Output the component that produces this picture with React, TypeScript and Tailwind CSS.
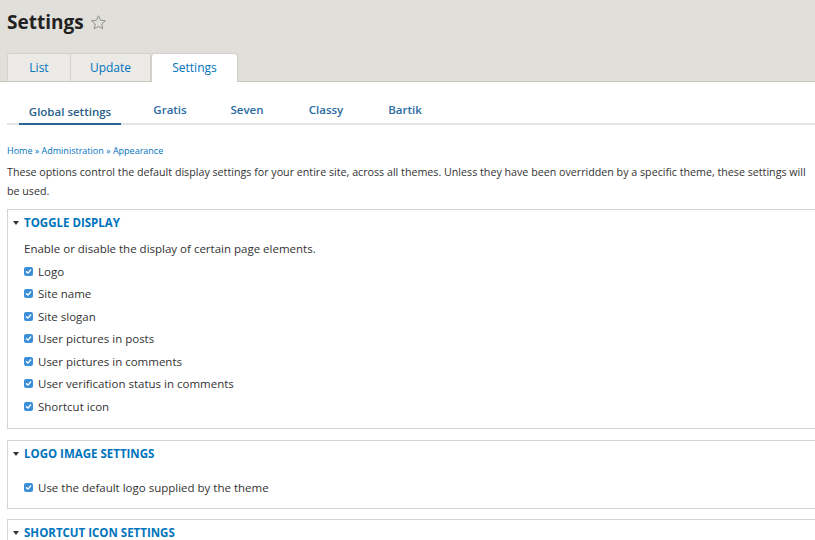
import React from 'react'

const ITEMS = [
  'Logo',
  'Site name',
  'Site slogan',
  'User pictures in posts',
  'User pictures in comments',
  'User verification status in comments',
  'Shortcut icon',
]

function Check() {
  return (
    <span className="w-[9px] h-[9px] rounded-[2px] bg-[#3b8fd9] flex items-center justify-center shrink-0">
      <svg width="7" height="7" viewBox="0 0 10 10" fill="none" stroke="white" strokeWidth="2" strokeLinecap="round" strokeLinejoin="round">
        <polyline points="2 5.2 4.2 7.3 8 2.8" />
      </svg>
    </span>
  )
}

function Legend({ title }: { title: string }) {
  return (
    <div className="flex items-center gap-[5px] h-[26px] pl-[5px] text-[11.5px] font-bold text-[#0074bd] uppercase">
      <svg width="6" height="4" viewBox="0 0 6 4"><polygon points="0,0 6,0 3,4" fill="#333" /></svg>
      {title}
    </div>
  )
}

function Option({ label }: { label: string }) {
  return (
    <div className="flex items-center gap-[5px] h-[22.5px] text-[11.5px] text-[#333]">
      <Check />
      {label}
    </div>
  )
}

export default function App() {
  return (
    <div className="w-[815px] h-[540px] overflow-hidden bg-white text-[#333]" style={{ fontFamily: '"Open Sans", "DejaVu Sans", sans-serif' }}>
      {/* Page header */}
      <div className="bg-[#e0dfda] border-b border-[#c9c7c0] pt-[8px]">
        <div className="flex items-center gap-[6px] pl-[7px] h-[28px]">
          <h1 className="text-[19px] font-bold text-[#222]">Settings</h1>
          <svg width="17" height="17" viewBox="0 0 24 24" fill="none" stroke="#8a8a85" strokeWidth="1.3" strokeLinejoin="round">
            <polygon points="12 2.5 14.9 8.8 21.7 9.5 16.6 14.1 18 20.8 12 17.4 6 20.8 7.4 14.1 2.3 9.5 9.1 8.8" />
          </svg>
        </div>
        <div className="flex items-end pl-[7px] mt-[16px] h-[29px]">
          <div className="w-[64px] h-[28px] flex items-center justify-center bg-[#ebeae6] border border-b-0 border-[#d3d1ca] rounded-tl-[3px] text-[12px] text-[#0074bd]">List</div>
          <div className="w-[80px] h-[28px] flex items-center justify-center bg-[#ebeae6] border border-l-0 border-b-0 border-[#d3d1ca] text-[12px] text-[#0074bd]">Update</div>
          <div className="w-[87px] h-[29px] -mb-px flex items-center justify-center bg-white border border-b-0 border-[#d3d1ca] rounded-t-[4px] text-[12px] text-[#0074bd]">Settings</div>
        </div>
      </div>

      {/* Secondary tabs */}
      <div className="flex items-end h-[43px] border-b-2 border-[#e4e4e2] ml-[7px]">
        <div className="w-[102px] ml-[12px] h-[22px] -mb-[2px] flex items-start justify-center border-b-2 border-[#2a6496] text-[11.5px] font-semibold text-[#2a5f8a]">Global settings</div>
        <div className="w-[98px] h-[22px] flex items-start justify-center text-[11.5px] font-semibold text-[#2a6ba3]">Gratis</div>
        <div className="w-[56px] h-[22px] flex items-start justify-center text-[11.5px] font-semibold text-[#2a6ba3]">Seven</div>
        <div className="w-[102px] h-[22px] flex items-start justify-center text-[11.5px] font-semibold text-[#2a6ba3]">Classy</div>
        <div className="w-[56px] h-[22px] flex items-start justify-center text-[11.5px] font-semibold text-[#2a6ba3]">Bartik</div>
      </div>

      <div className="pl-[7px] pt-[19px]">
        <div className="text-[9px] text-[#0074bd] leading-[14px]">Home » Administration » Appearance</div>
        <p className="mt-[5px] pr-[4px] text-[10.7px] leading-[19px] text-[#333]">
          These options control the default display settings for your entire site, across all themes. Unless they have been overridden by a specific theme, these settings will be used.
        </p>

        <div className="mt-[8px] -mr-[10px] border border-[#d4d4d4] bg-white">
          <Legend title="Toggle display" />
          <div className="pl-[16px] pt-[2px] pb-[10px]">
            <div className="h-[22px] flex items-center text-[11.5px] text-[#333]">Enable or disable the display of certain page elements.</div>
            {ITEMS.map((label) => (
              <Option key={label} label={label} />
            ))}
          </div>
        </div>

        <div className="mt-[11px] -mr-[10px] border border-[#d4d4d4] bg-white">
          <Legend title="Logo image settings" />
          <div className="pl-[16px] pt-[10px] pb-[9px]">
            <Option label="Use the default logo supplied by the theme" />
          </div>
        </div>

        <div className="mt-[10px] -mr-[10px] border border-[#d4d4d4] bg-white">
          <Legend title="Shortcut icon settings" />
          <div className="h-[40px]" />
        </div>
      </div>
    </div>
  )
}
